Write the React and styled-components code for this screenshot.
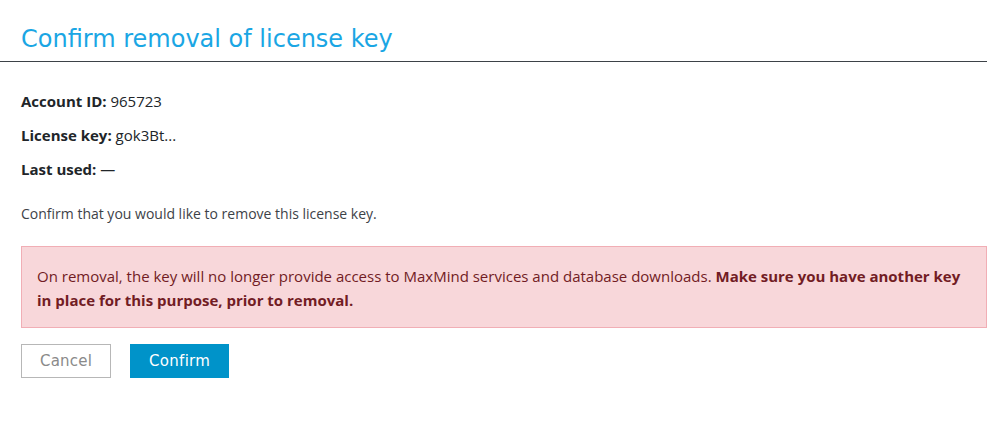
import React from 'react'
import styled, {createGlobalStyle} from 'styled-components'

const Global = createGlobalStyle`
  body {
    margin: 0;
    background: #fff;
    font-family: "Open Sans", "Noto Sans", sans-serif;
    color: #212529;
  }
`

function App() {
  return (
    <Page>
      <Global />
      <Header>
        <Title>Confirm removal of license key</Title>
      </Header>
      <Body>
        <Details>
          <Field><b>Account ID:</b> 965723</Field>
          <Field><b>License key:</b> gok3Bt...</Field>
          <Field><b>Last used:</b> —</Field>
        </Details>
        <Note>Confirm that you would like to remove this license key.</Note>
        <Alert>
          On removal, the key will no longer provide access to MaxMind services and database downloads.{' '}
          <b>Make sure you have another key in place for this purpose, prior to removal.</b>
        </Alert>
        <Actions>
          <Button>Cancel</Button>
          <Button primary>Confirm</Button>
        </Actions>
      </Body>
    </Page>
  )
}

export default App

const Page = styled.div`
  width: 987px;
  padding-top: 25px;
`

const Header = styled.div`
  padding: 0 0 7px 21px;
  border-bottom: 1px solid #3d4248;
`

const Title = styled.h1`
  margin: 0;
  font-family: "DejaVu Sans", sans-serif;
  font-weight: 400;
  font-size: 24px;
  line-height: 29px;
  color: #1aa6e4;
`

const Body = styled.div`
  padding: 28px 0 0 21px;
`

const Details = styled.div`
  display: flex;
  flex-direction: column;
  gap: 12px;
`

const Field = styled.div`
  font-size: 15px;
  line-height: 22px;
  color: #212529;
  b {
    font-weight: 700;
  }
`

const Note = styled.p`
  margin: 24px 0 0;
  font-size: 14px;
  line-height: 20px;
  color: #3d4248;
`

const Alert = styled.div`
  margin-top: 22px;
  padding: 17px 16px 15px 15px;
  background: #f8d7da;
  border: 1px solid #f1aeb5;
  color: #721c24;
  font-size: 15px;
  line-height: 24px;
  b {
    font-weight: 700;
  }
`

const Actions = styled.div`
  display: flex;
  gap: 19px;
  margin-top: 16px;
`

const Button = styled.button`
  height: 34px;
  padding: 0 ${p => p.primary ? '18px' : '18px'};
  font-family: "DejaVu Sans", sans-serif;
  font-size: 15px;
  letter-spacing: ${p => p.primary ? '0.3px' : '0.2px'};
  cursor: pointer;
  border: 1px solid ${p => p.primary ? '#0093c9' : '#b7b7b7'};
  background: ${p => p.primary ? '#0093c9' : '#fff'};
  color: ${p => p.primary ? '#fff' : '#8a8a8a'};
`
